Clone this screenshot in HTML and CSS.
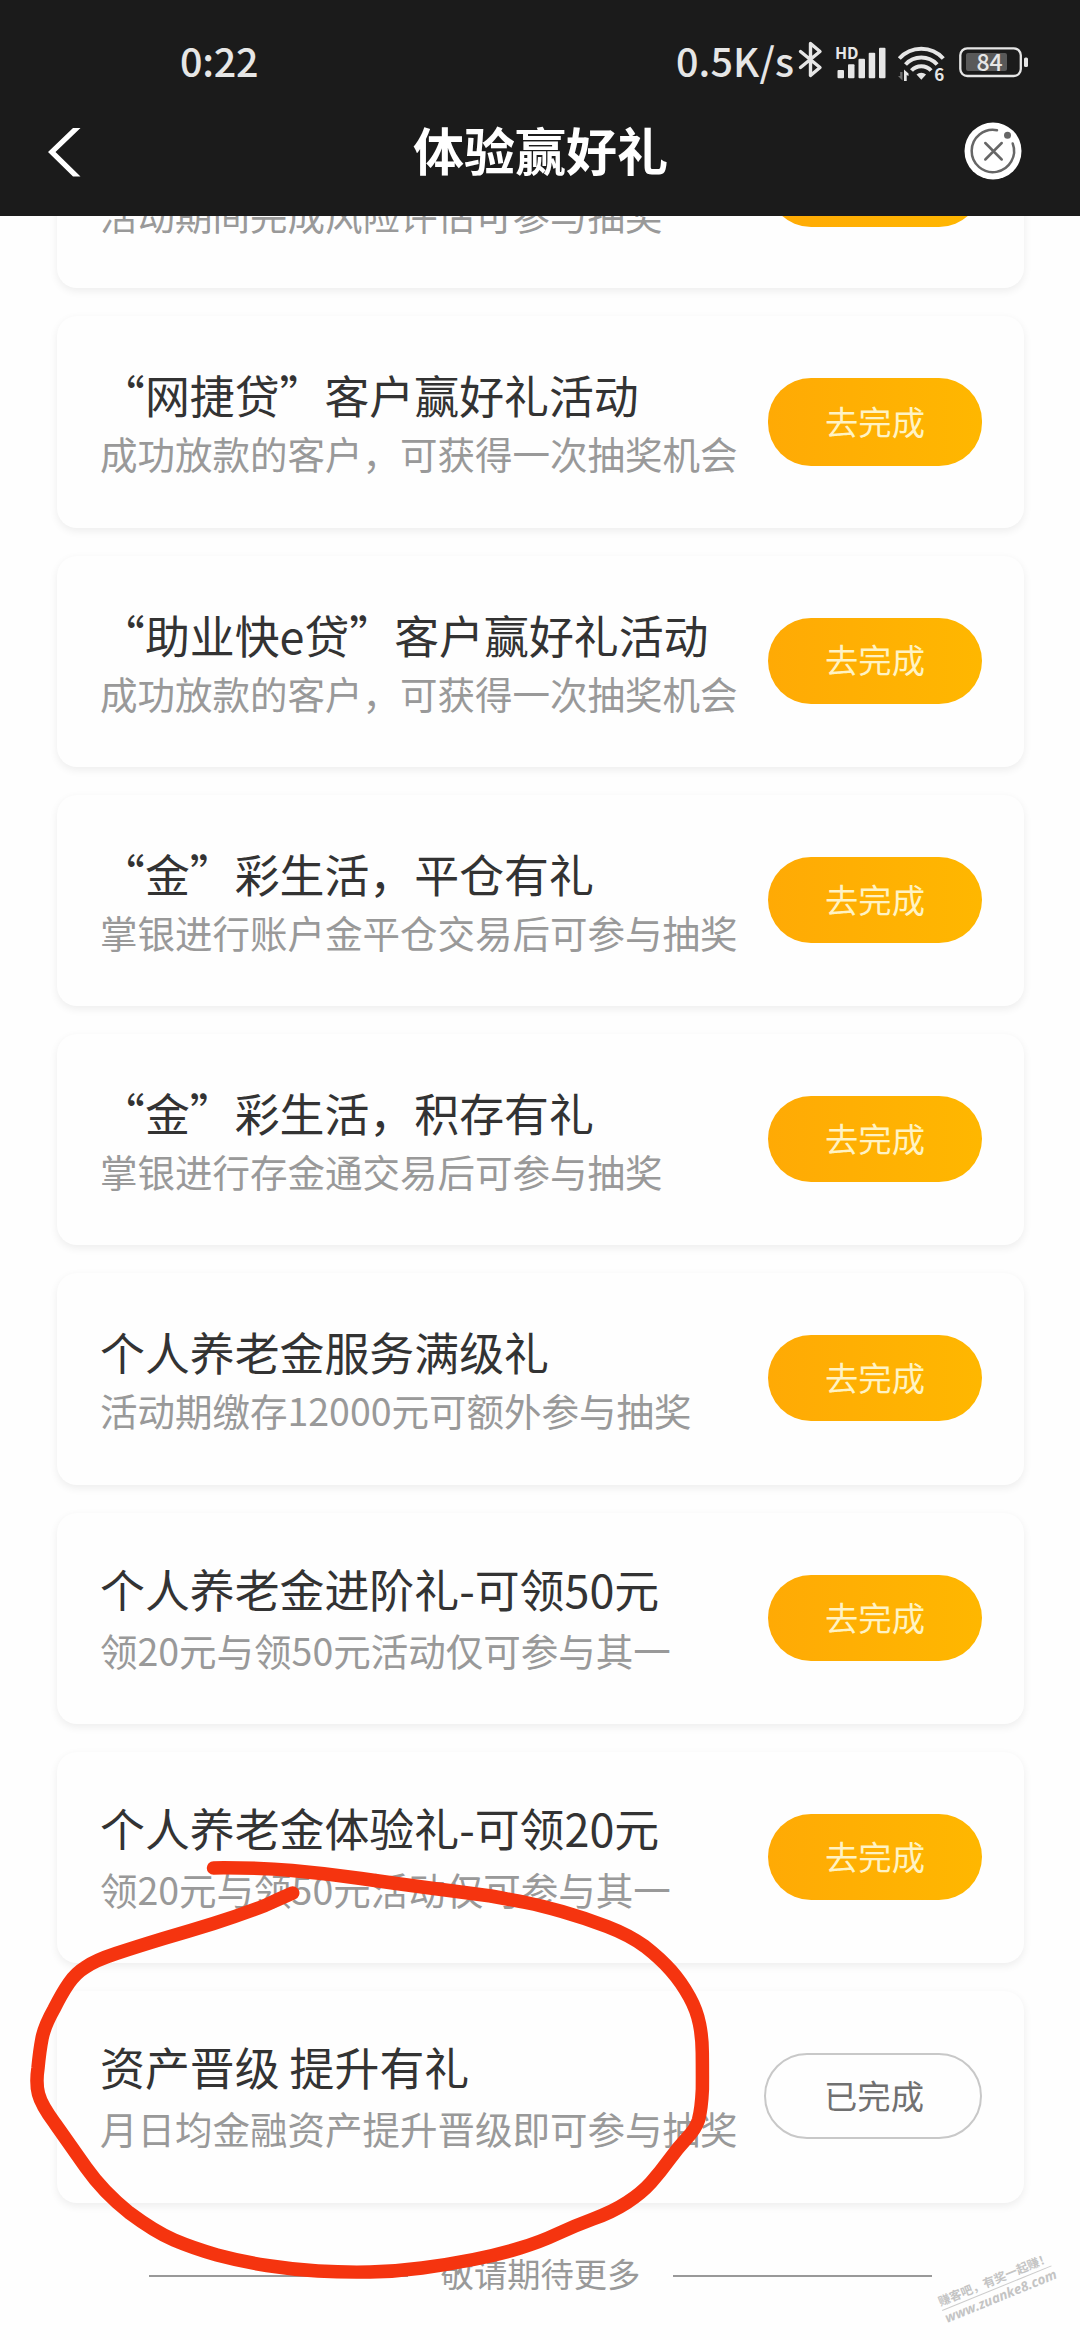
FILE: index.html
```html
<!DOCTYPE html>
<html lang="zh-CN">
<head>
<meta charset="utf-8">
<title>体验赢好礼</title>
<link rel="stylesheet" href="styles.css">
</head>
<body>
<div class="screen">
  <header class="header">
    <div class="status">
      <span class="clock">0:22</span>
      <div class="indicators">
        <span class="speed">0.5K/s</span>
        <svg class="status-icons" width="240" height="50" viewBox="0 0 240 50" fill="none" stroke="#e6e6e6">
          <path d="M2.5 15.5 22 31.500 12.500 39.500V7.500L22 15.500 2.500 31.500" stroke-width="3.400" stroke-linejoin="round" stroke-linecap="round"/>
          <text class="hd" x="37" y="22.500">HD</text>
          <g fill="#e6e6e6" stroke="none">
            <rect x="39.500" y="34" width="6.500" height="8.300" rx="1"/>
            <rect x="50" y="28.300" width="6.500" height="14" rx="1"/>
            <rect x="60.500" y="22.700" width="6.500" height="19.600" rx="1"/>
            <rect x="70.700" y="16.700" width="6.500" height="25.600" rx="1"/>
            <rect x="81" y="11.700" width="6.500" height="30.600" rx="1"/>
            <path d="M118.500 38.500a7.500 7.500 0 0 1 9.600 0l-4.800 5.300z"/>
            <path d="M106 45v-11.500l4.500 4v2.500l-1.800-1V45z"/>
            <path d="M104.500 36v8.500l-4.500-4.500h2.200v-4z" opacity=".4"/>
          </g>
          <g stroke-width="4">
            <path d="M101.300 22.500a29.500 29.500 0 0 1 44 0"/>
            <path d="M107.500 28.500a21.500 21.500 0 0 1 31.600 0"/>
            <path d="M113.500 34.500a13.200 13.200 0 0 1 19.600 0"/>
          </g>
          <text class="six" x="136.200" y="44.500">6</text>
          <rect x="162.300" y="12.300" width="60.500" height="27.700" rx="7" stroke-width="2.300"/>
          <rect x="168" y="17" width="41" height="18" rx="2" fill="#595959" stroke="none"/>
          <rect x="226" y="21.500" width="4" height="9.500" rx="1.500" fill="#e6e6e6" stroke="none"/>
          <text class="charge" x="178.500" y="35">84</text>
        </svg>
      </div>
    </div>
    <div class="nav">
      <svg class="back" width="36" height="54" viewBox="0 0 36 54"><path d="M32.500 3H25L0 27 25 51.500H32.500L7.500 27z" fill="#fff"/></svg>
      <h1 class="page-title">体验赢好礼</h1>
      <svg class="close" width="58" height="58" viewBox="0 0 58 58" fill="none" stroke="#666" stroke-width="2.500" stroke-linecap="round">
        <circle cx="29" cy="29" r="28.500" fill="#fff" stroke="none"/>
        <path d="M33 8.200A21.200 21.200 0 1 0 48.700 21.500M21.300 21 37.700 37.500M37.700 21 21.300 37.500"/>
        <circle cx="43.500" cy="13.200" r="3.500" fill="#666" stroke="none"/>
      </svg>
    </div>
  </header>

  <main class="content">
    <section class="list">
      <article class="card first">
        <div class="info"><p>活动期间完成风险评估可参与抽奖</p></div>
        <button class="btn tall"></button>
      </article>
      <article class="card">
        <div class="info"><h2>“网捷贷”客户赢好礼活动</h2><p>成功放款的客户，可获得一次抽奖机会</p></div>
        <button class="btn tall">去完成</button>
      </article>
      <article class="card">
        <div class="info"><h2>“助业快e贷”客户赢好礼活动</h2><p>成功放款的客户，可获得一次抽奖机会</p></div>
        <button class="btn">去完成</button>
      </article>
      <article class="card">
        <div class="info"><h2>“金”彩生活，平仓有礼</h2><p>掌银进行账户金平仓交易后可参与抽奖</p></div>
        <button class="btn">去完成</button>
      </article>
      <article class="card">
        <div class="info"><h2>“金”彩生活，积存有礼</h2><p>掌银进行存金通交易后可参与抽奖</p></div>
        <button class="btn">去完成</button>
      </article>
      <article class="card">
        <div class="info"><h2>个人养老金服务满级礼</h2><p>活动期缴存12000元可额外参与抽奖</p></div>
        <button class="btn">去完成</button>
      </article>
      <article class="card loose">
        <div class="info"><h2>个人养老金进阶礼-可领50元</h2><p>领20元与领50元活动仅可参与其一</p></div>
        <button class="btn">去完成</button>
      </article>
      <article class="card loose">
        <div class="info"><h2>个人养老金体验礼-可领20元</h2><p>领20元与领50元活动仅可参与其一</p></div>
        <button class="btn">去完成</button>
      </article>
      <article class="card loose">
        <div class="info"><h2>资产晋级 提升有礼</h2><p>月日均金融资产提升晋级即可参与抽奖</p></div>
        <button class="btn done">已完成</button>
      </article>
    </section>
    <footer class="more"><i class="rule"></i><span>敬请期待更多</span><i class="rule"></i></footer>
  </main>

  <svg class="marker" width="1080" height="540" viewBox="0 1800 1080 540">
    <path fill="none" stroke="#f5340f" stroke-width="13.500" stroke-linecap="round" stroke-linejoin="round" d="M213.500 1867.900Q258 1867.500 292 1870.500T361 1878.500Q396 1883.600 430 1888T491 1896Q516.500 1900.700 528 1903T562 1911.500Q584.800 1918 607 1926.500T645 1946.500Q660.500 1958.600 671 1970.500T689.500 1997Q696.700 2010 699.500 2024T702.300 2053Q702.500 2069 702.400 2089Q701.500 2108.600 698.500 2120Q695.600 2129 687 2138Q677.700 2148 669 2160T651 2182.500Q641.600 2193 627 2202.500T593 2219Q574 2226 557 2234T520 2248Q499 2254.500 473.500 2259.500T422 2268Q396 2271.500 370 2272T318 2271Q292.700 2269.500 267 2265.500T217 2255Q192.800 2248 174 2240T129 2212.500Q103.300 2192 86 2167.500T55 2123.500Q41.300 2105 38.500 2094T38 2068Q39.600 2051 42 2038.500T54 2009Q62 1993 69 1983T85 1967.500Q94.700 1960.500 116 1953.500T163.500 1938.500Q189.400 1931 213.500 1923.500T265 1905.500Q280 1898.500 292.700 1893"/>
  </svg>

  <div class="watermark">
    <span class="slogan">赚客吧，有奖一起赚！</span>
    <span class="site">www.zuanke8.com</span>
  </div>
</div>
</body>
</html>
```
FILE: styles.css
```css
* { box-sizing: border-box; }

body {
  margin: 0;
  font-family: "Noto Sans CJK SC", sans-serif;
  background: #fefefe;
}

h1, h2, p { margin: 0; font-weight: 400; white-space: nowrap; }

.screen {
  position: relative;
  width: 1080px;
  height: 2340px;
  overflow: hidden;
  display: flex;
  flex-direction: column;
}

.header {
  flex: none;
  height: 216px;
  padding-top: 31px;
  background: #1b1b1b;
}

.status {
  display: flex;
  justify-content: space-between;
  height: 58px;
  padding: 0 42px 0 180px;
  color: #e6e6e6;
}

.clock, .speed {
  font-size: 39.500px;
  line-height: 58px;
  font-weight: 500;
  height: 58px;
}

.clock { letter-spacing: -.3px; }

.indicators { display: flex; gap: 4px; }

.speed { letter-spacing: .1px; }

.status-icons { margin-top: 4.500px; }
.status-icons text { fill: #e6e6e6; stroke: none; }
.status-icons .hd { font-size: 16px; font-weight: 700; }
.status-icons .six { font-size: 17px; font-weight: 700; }
.status-icons .charge { font-size: 23px; font-weight: 500; }

.nav {
  display: grid;
  grid-template-columns: 58px 1fr 58px;
  align-items: center;
  height: 127px;
  padding: 0 58px 0 47px;
}

.page-title {
  color: #fff;
  font-size: 51px;
  line-height: 74px;
  font-weight: 700;
  text-align: center;
  padding-bottom: 7px;
  margin-right: -12px;
}

.back { margin-bottom: 1px; margin-left: 1px; }
.close { margin-left: 0; margin-bottom: 3px; }

.content {
  flex: 1;
  overflow: hidden;
  padding: 0 56px 0 57px;
}

.list {
  display: flex;
  flex-direction: column;
  gap: 28px;
  margin-top: -139px;
}

.card {
  display: flex;
  justify-content: space-between;
  align-items: flex-start;
  height: 211.300px;
  padding: 49px 42px 0 43px;
  border-radius: 20px;
  background: #fefefe;
  box-shadow: 0 3px 9px rgba(0, 0, 0, .07);
}

.info { display: flex; flex-direction: column; gap: 3px; }
.first .info { padding-top: 63px; }

.info h2 {
  font-size: 44.900px;
  line-height: 60px;
  color: #333;
}

.info p {
  font-size: 37.500px;
  line-height: 50px;
  color: #999;
}

.loose .info { margin-top: -3px; gap: 6px; }

.btn {
  width: 214px;
  height: 86px;
  margin-top: 13px;
  padding: 0 0 3px;
  border: 0;
  border-radius: 43px;
  font: 400 33.300px/1 "Noto Sans CJK SC", sans-serif;
  color: #fff3c4;
  background: linear-gradient(90deg, #ffaa05, #ffb700);
}

.card .tall { height: 88px; }

.card .done {
  width: 218px;
  padding-left: 2px;
  color: #707070;
  background: transparent;
  border: 2px solid #c8c8c8;
}

.more {
  display: flex;
  align-items: center;
  justify-content: center;
  gap: 33px;
  height: 50px;
  margin-top: 47px;
  font-size: 33.300px;
  line-height: 50px;
  color: #999;
}

.more span { margin-top: -4px; }

.rule { width: 259px; height: 2px; margin-top: 3px; background: #999; }

.marker { position: absolute; left: 0; top: 1800px; }

.watermark {
  position: absolute;
  left: 942px;
  top: 2292px;
  width: 118px;
  display: flex;
  flex-direction: column;
  transform: rotate(-22.200deg);
  transform-origin: 0 18px;
  color: #c4c4c4;
  white-space: nowrap;
}

.slogan {
  font-size: 12px;
  line-height: 18px;
  font-weight: 700;
  border-bottom: 1px solid #ccc;
}

.site {
  font: italic 700 13.500px/16px "Open Sans", sans-serif;
}
```
